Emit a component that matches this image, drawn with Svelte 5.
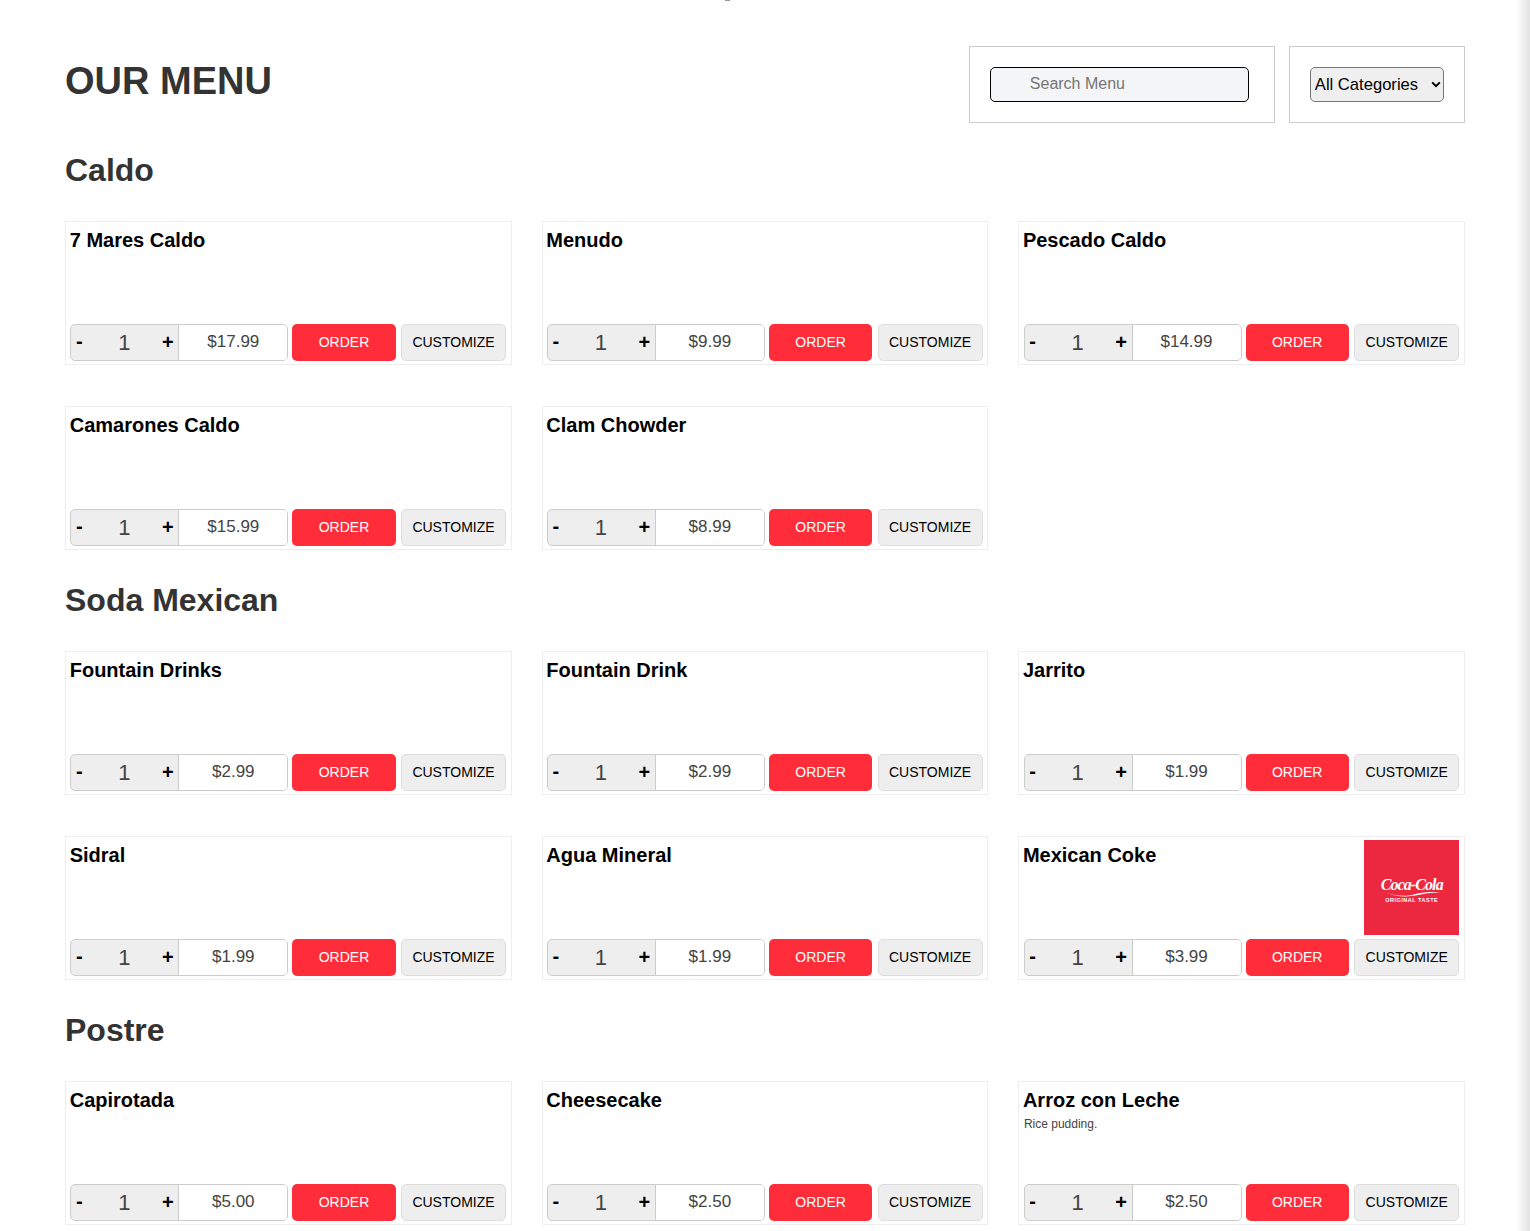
<script>
  const sections = [
    { name: 'Caldo', items: [
      { name: '7 Mares Caldo', price: '$17.99' },
      { name: 'Menudo', price: '$9.99' },
      { name: 'Pescado Caldo', price: '$14.99' },
      { name: 'Camarones Caldo', price: '$15.99' },
      { name: 'Clam Chowder', price: '$8.99' }
    ]},
    { name: 'Soda Mexican', items: [
      { name: 'Fountain Drinks', price: '$2.99' },
      { name: 'Fountain Drink', price: '$2.99' },
      { name: 'Jarrito', price: '$1.99' },
      { name: 'Sidral', price: '$1.99' },
      { name: 'Agua Mineral', price: '$1.99' },
      { name: 'Mexican Coke', price: '$3.99', logo: true }
    ]},
    { name: 'Postre', items: [
      { name: 'Capirotada', price: '$5.00' },
      { name: 'Cheesecake', price: '$2.50' },
      { name: 'Arroz con Leche', price: '$2.50', desc: 'Rice pudding.' }
    ]}
  ];
</script>

<div class="page">
  <span class="speck"></span>
  <main class="menu">
    <header class="head">
      <h1>OUR MENU</h1>
      <div class="tools">
        <div class="tool search-box"><input class="search" placeholder="Search Menu" /></div>
        <div class="tool">
          <div class="select-wrap">
            <select class="cats"><option>All Categories</option></select>
            <svg class="chev" viewBox="0 0 10 7" width="10" height="7" aria-hidden="true">
              <path d="M1.2 1.4 L5 5.2 L8.8 1.4" fill="none" stroke="#000" stroke-width="2" />
            </svg>
          </div>
        </div>
      </div>
    </header>

    {#each sections as section}
      <section>
        <h2>{section.name}</h2>
        <div class="grid">
          {#each section.items as item}
            <article class="card">
              <div class="top">
                <div class="info">
                  <h3>{item.name}</h3>
                  {#if item.desc}<p>{item.desc}</p>{/if}
                </div>
                {#if item.logo}
                  <div class="logo">
                    <span class="script">Coca‑Cola</span>
                    <svg class="swoosh" viewBox="0 0 64 6" width="60" height="6" aria-hidden="true">
                      <path d="M4 1.5 C16 6 28 5.5 36 3 C44 0.8 54 0.5 62 1 C52 1.4 45 2.4 37 4.4 C27 6.6 14 6 4 1.5 Z" fill="#fff" />
                    </svg>
                    <span class="taste">ORIGINAL TASTE</span>
                  </div>
                {/if}
              </div>
              <div class="actions">
                <div class="qty">
                  <button class="step minus">-</button>
                  <span class="count">1</span>
                  <button class="step plus">+</button>
                  <span class="price">{item.price}</span>
                </div>
                <button class="order">ORDER</button>
                <button class="custom">CUSTOMIZE</button>
              </div>
            </article>
          {/each}
        </div>
      </section>
    {/each}
  </main>
  <div class="edge"></div>
</div>

<style>
  :global(body) {
    margin: 0;
    background: #fff;
    font-family: "Liberation Sans", Arial, sans-serif;
  }
  .page {
    position: relative;
    height: 1231px;
    overflow: hidden;
  }
  .speck {
    position: absolute;
    left: 725px;
    top: 0;
    width: 5px;
    height: 1px;
    background: #999;
  }
  .edge {
    position: absolute;
    top: 0;
    right: 0;
    bottom: 0;
    width: 14px;
    background: linear-gradient(to right, rgba(225, 225, 225, 0), #e2e2e2);
  }
  .menu {
    box-sizing: border-box;
    width: 1530px;
    padding: 46px 65.2px 0 65px;
  }
  .head {
    display: flex;
    justify-content: space-between;
    align-items: flex-start;
    height: 77px;
  }
  h1 {
    margin: 0;
    font-size: 38px;
    line-height: 70px;
    font-weight: 700;
    color: #333;
  }
  .tools {
    display: flex;
    gap: 14px;
  }
  .tool {
    box-sizing: border-box;
    height: 77px;
    padding: 20px;
    border: 1px solid #ccc;
  }
  .search-box {
    padding-right: 25px;
  }
  .search {
    display: block;
    box-sizing: border-box;
    width: 259px;
    height: 35px;
    padding: 0 0 2px 39px;
    border: 1px solid #000;
    border-radius: 5px;
    background: #f4f5f7;
    font: 16px "Liberation Sans", Arial, sans-serif;
  }
  .search::placeholder {
    color: #757575;
  }
  .select-wrap {
    position: relative;
    width: 134px;
    height: 35px;
  }
  .cats {
    display: block;
    appearance: none;
    box-sizing: border-box;
    width: 134px;
    height: 35px;
    padding: 0 0 0 4px;
    border: 1px solid #767676;
    border-radius: 5px;
    background-color: #efefef;
    color: #000;
    font: 16.6px "Liberation Sans", Arial, sans-serif;
  }
  .chev {
    position: absolute;
    left: 121px;
    top: 14px;
    pointer-events: none;
  }
  h2 {
    margin: 0;
    padding-top: 29px;
    height: 69px;
    font-size: 32px;
    line-height: 37px;
    font-weight: 700;
    color: #333;
    box-sizing: content-box;
  }
  .grid {
    display: grid;
    grid-template-columns: repeat(3, minmax(0, 1fr));
    column-gap: 30px;
    row-gap: 41px;
  }
  section + section {
    margin-top: 3px;
  }
  .card {
    box-sizing: border-box;
    min-width: 0;
    height: 144px;
    padding: 3px 4.6px 3px 4.3px;
    border: 1px solid #eee;
  }
  .top {
    display: flex;
    justify-content: space-between;
    height: 95px;
    margin-bottom: 4px;
  }
  .info {
    padding-top: 1px;
    margin-left: -0.6px;
  }
  h3 {
    margin: 0;
    font-size: 20px;
    line-height: 29px;
    font-weight: 700;
    color: #000;
  }
  .info p {
    margin: 2px 0 0 1px;
    font-size: 12px;
    line-height: 14px;
    color: #444;
  }
  .logo {
    box-sizing: border-box;
    width: 95px;
    height: 95px;
    padding-top: 35px;
    background: #ec2840;
    color: #fff;
    display: flex;
    flex-direction: column;
    align-items: center;
  }
  .script {
    font: italic 700 16px/19px "Liberation Serif", serif;
    letter-spacing: -0.9px;
  }
  .swoosh {
    display: block;
    margin-top: -3px;
  }
  .taste {
    font-size: 5.5px;
    line-height: 7px;
    font-weight: 700;
    letter-spacing: 0.5px;
  }
  .actions {
    display: flex;
    align-items: stretch;
    height: 37px;
  }
  .qty {
    box-sizing: border-box;
    display: flex;
    flex: 0 0 218px;
    align-items: center;
    border: 1px solid #ccc;
    border-radius: 5px;
    background: #eee;
    overflow: hidden;
  }
  .step {
    width: 20px;
    height: 100%;
    padding: 0;
    border: 0;
    background: transparent;
    color: #000;
    font: 700 20px "Liberation Sans", Arial, sans-serif;
  }
  .minus {
    width: 19px;
    padding: 0 3px 3px 0;
  }
  .plus {
    padding: 0 1px 1px 0;
  }
  .count {
    flex: 0 0 68px;
    text-align: center;
    font-size: 22px;
    color: #444;
  }
  .price {
    box-sizing: border-box;
    align-self: stretch;
    flex: 1;
    padding-bottom: 1px;
    display: flex;
    align-items: center;
    justify-content: center;
    background: #fff;
    border-left: 1px solid #ccc;
    font-size: 17px;
    color: #444;
  }
  .order,
  .custom {
    box-sizing: border-box;
    height: 37px;
    padding: 0 0 2px;
    border-radius: 5px;
    font: 14px "Liberation Sans", Arial, sans-serif;
  }
  .order {
    flex: 1 1 0;
    min-width: 0;
    margin-left: 4px;
    border: 0;
    background: #ff2d39;
    color: #fff;
  }
  .custom {
    flex: 0 0 105px;
    margin-left: 5.3px;
    border: 1px solid #ddd;
    background: #eee;
    color: #000;
  }
</style>
